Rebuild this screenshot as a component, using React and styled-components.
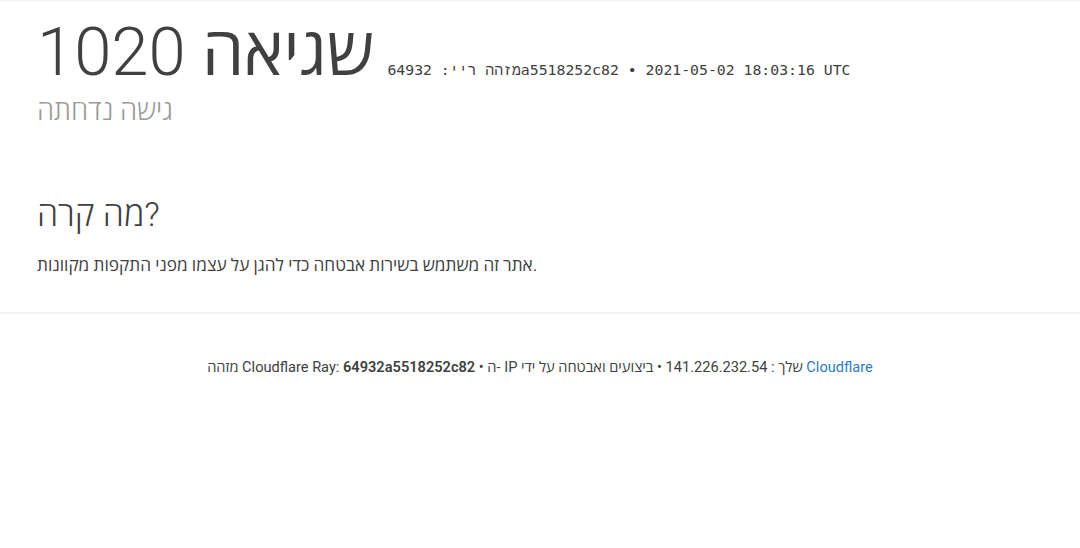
import React from 'react';
import styled, { createGlobalStyle } from 'styled-components';

const GlobalStyle = createGlobalStyle`
  html, body {
    margin: 0;
    padding: 0;
    background: #fff;
  }
  body {
    font-family: Roboto, "Open Sans", "Liberation Sans", sans-serif;
    color: #404040;
  }
`;

const Page = styled.div`
  min-height: 548px;
  border-top: 2px solid #f6f6f6;
  box-sizing: border-box;
`;

const Wrapper = styled.div`
  padding: 0 37px;
`;

const Overview = styled.header`
  padding-top: 17px;
`;

const Title = styled.h1`
  margin: 0;
  font-size: 67px;
  font-weight: 300;
  line-height: 67px;
  white-space: nowrap;
`;

const ErrorType = styled.span`
  font-weight: 500;
`;

const RayId = styled.small`
  display: inline-block;
  margin-left: -3px;
  font-family: "DejaVu Sans Mono", "Liberation Mono", monospace;
  font-size: 14.8px;
  font-weight: 400;
  line-height: 1;
  color: #404040;
`;

const Subheadline = styled.h2`
  margin: 7px 0 0;
  font-size: 27.5px;
  font-weight: 300;
  line-height: 36px;
  color: #999;
`;

const Section = styled.section`
  padding: 65px 0 35px;
`;

const Heading = styled.h2`
  margin: 0;
  font-size: 34px;
  font-weight: 300;
  line-height: 40px;
  color: #404040;
`;

const Text = styled.p`
  margin: 19px 0 0;
  font-size: 17.2px;
  line-height: 24px;
  color: #404040;
`;

const Footer = styled.footer`
  border-top: 2px solid #f2f2f2;
  padding-top: 43px;
  text-align: center;
  font-size: 14.6px;
  line-height: 20px;
  color: #404040;
`;

const Strong = styled.strong`
  font-weight: 600;
`;

const Link = styled.a`
  color: #2f7bbf;
  text-decoration: none;
`;

export default function App() {
  return (
    <Page>
      <GlobalStyle />
      <Wrapper>
        <Overview>
          <Title>
            <ErrorType>שגיאה</ErrorType> <span>1020</span>{' '}
            <RayId>מזהה ריי: 64932a5518252c82 &bull; 2021-05-02 18:03:16 UTC</RayId>
          </Title>
          <Subheadline>גישה נדחתה</Subheadline>
        </Overview>
        <Section>
          <Heading>מה קרה?</Heading>
          <Text>אתר זה משתמש בשירות אבטחה כדי להגן על עצמו מפני התקפות מקוונות.</Text>
        </Section>
      </Wrapper>
      <Footer>
        מזהה Cloudflare Ray: <Strong>64932a5518252c82</Strong> &bull; ה- IP שלך : 141.226.232.54 &bull; ביצועים ואבטחה על ידי{' '}
        <Link href="#">Cloudflare</Link>
      </Footer>
    </Page>
  );
}
